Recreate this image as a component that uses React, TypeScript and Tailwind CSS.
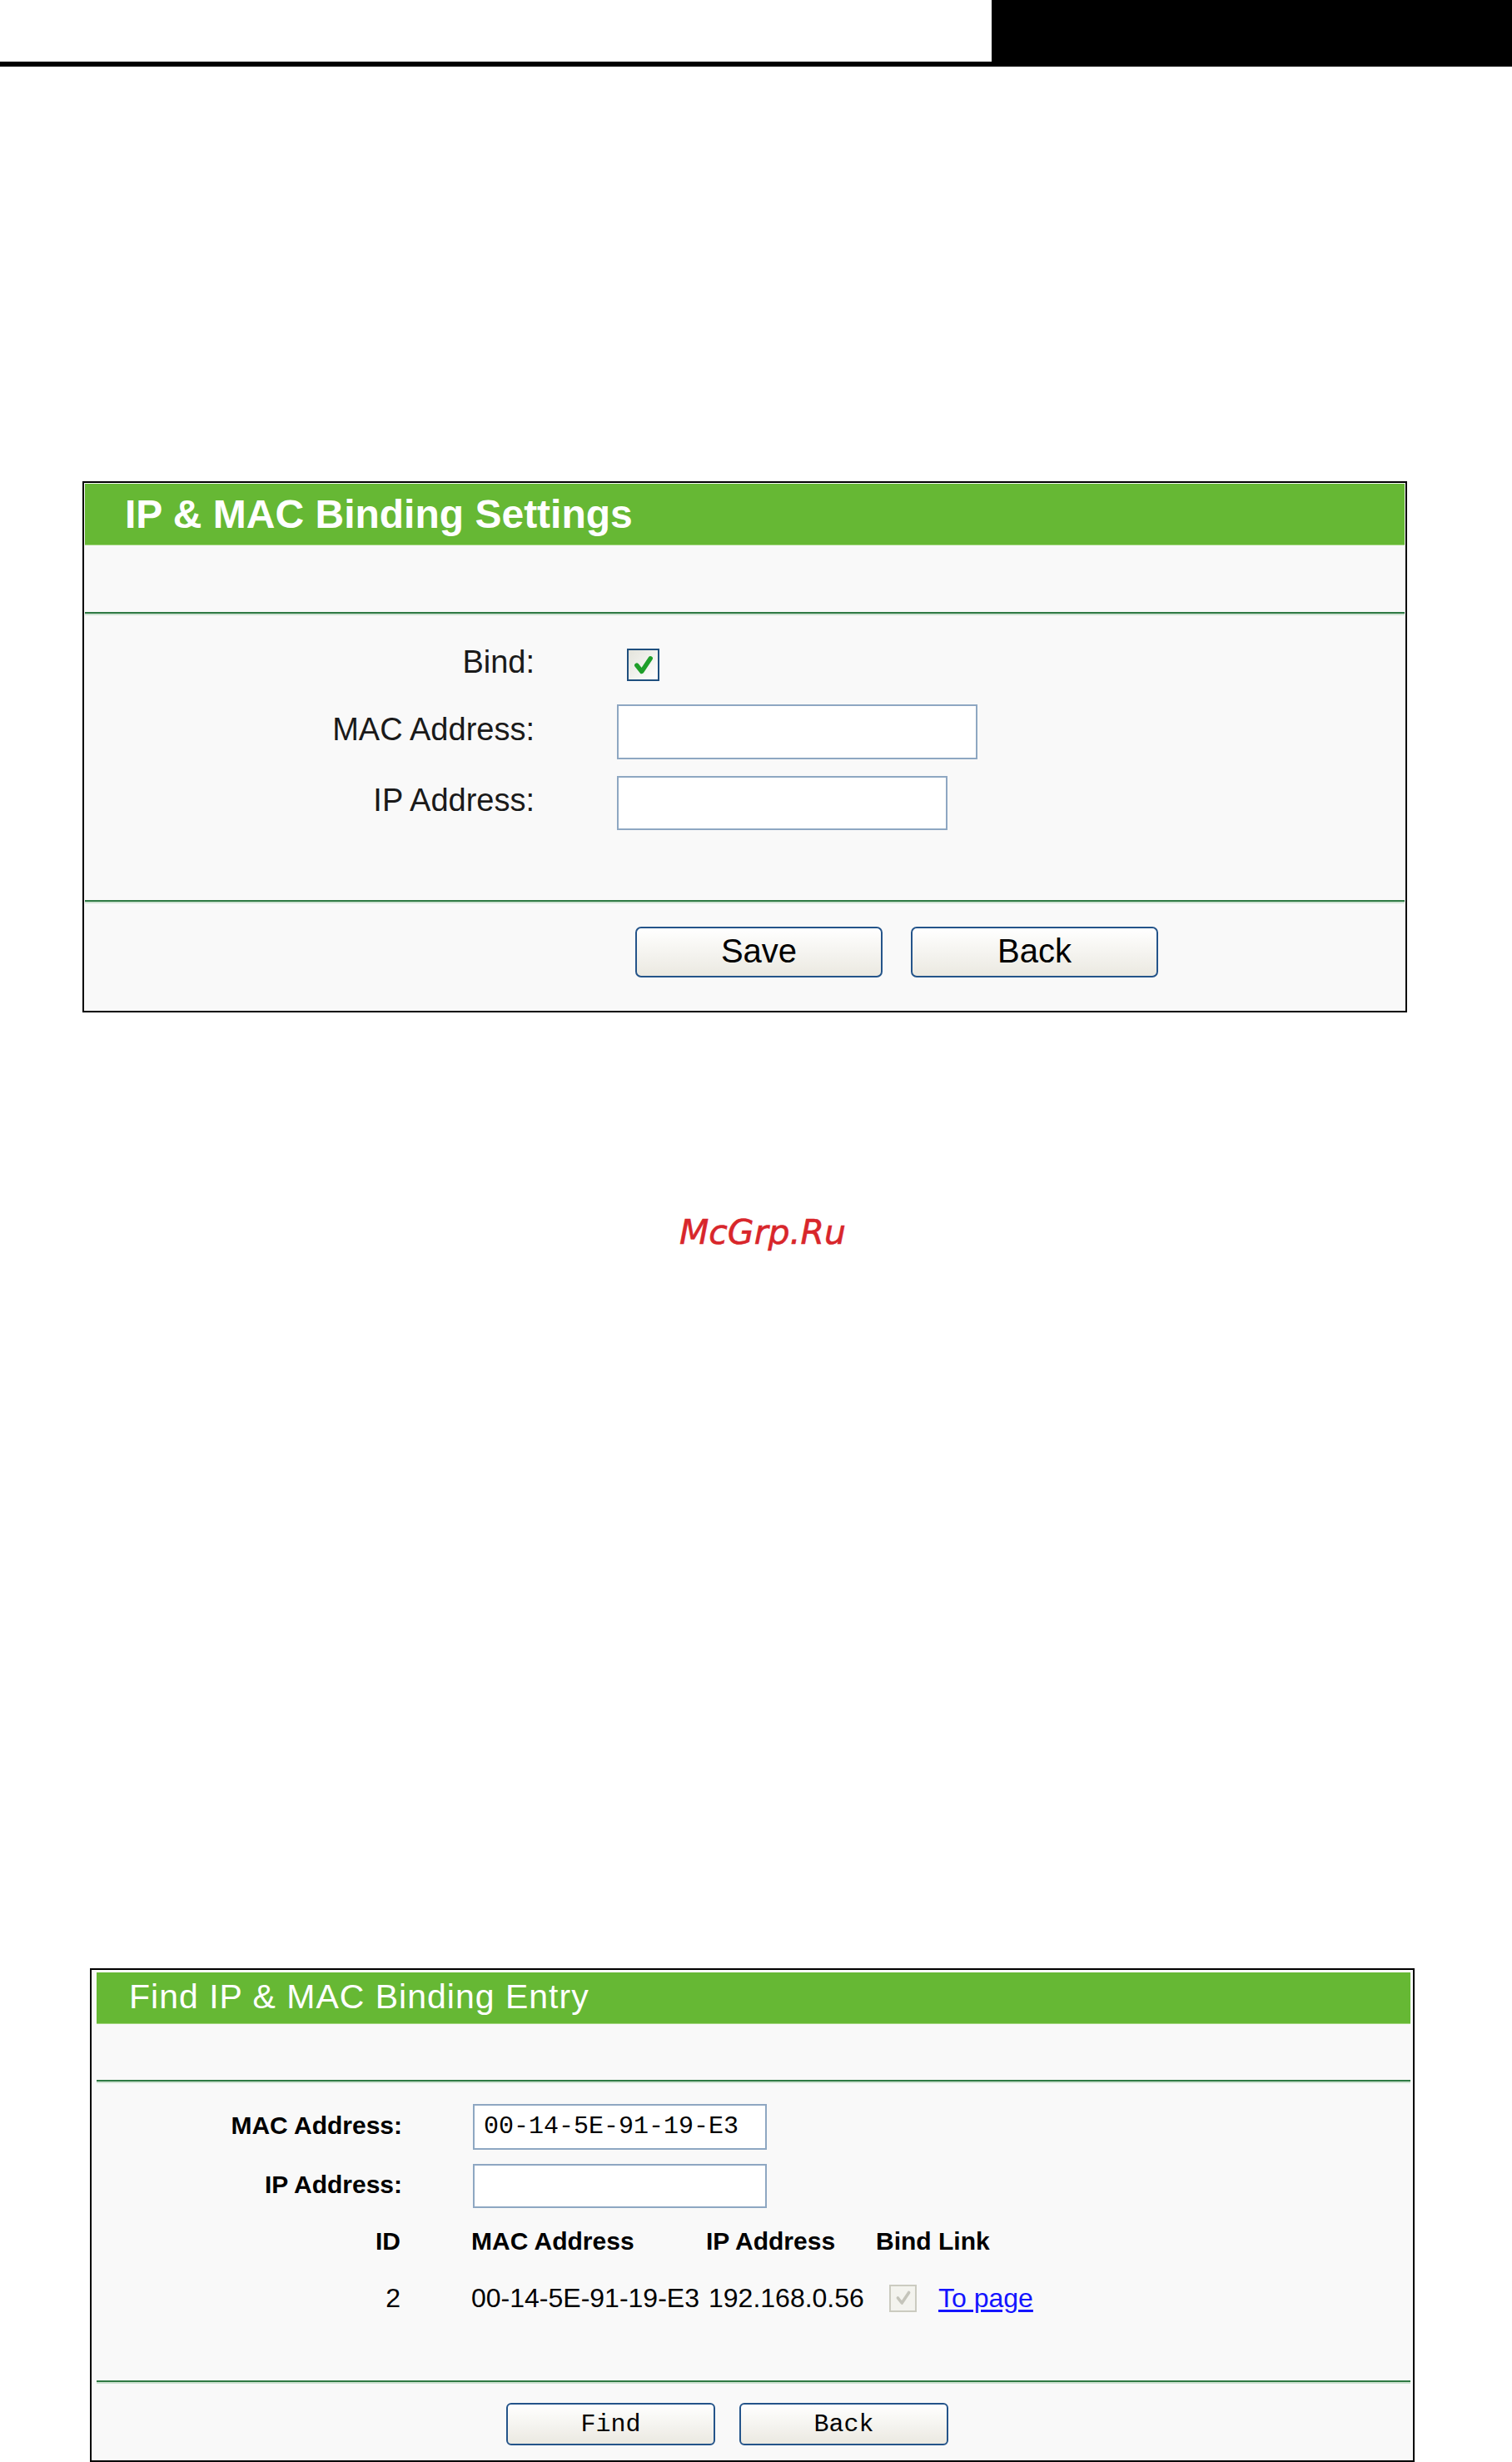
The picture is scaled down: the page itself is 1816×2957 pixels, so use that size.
import React from "react";

const sans = "font-['Liberation_Sans',Arial,sans-serif]";
const mono = "font-['Liberation_Mono','Courier_New',monospace]";

function Check({ className, width = 3.6 }: { className: string; width?: number }) {
  return (
    <svg viewBox="0 0 20 20" className={className}>
      <path d="M4.5 10 L8.5 15 L15.5 4.5" fill="none" stroke="currentColor" strokeWidth={width} strokeLinecap="round" strokeLinejoin="round" />
    </svg>
  );
}

function Divider() {
  return (
    <div>
      <div className="h-[2px] bg-[#2f7a44]" />
      <div className="h-[2px] bg-[#cfe3d3]" />
    </div>
  );
}

function BigButton({ label }: { label: string }) {
  return (
    <button className={`w-[297px] h-[61px] rounded-[7px] border-2 border-[#24548a] bg-gradient-to-b from-white to-[#ebe9e1] text-[40px] leading-none text-black pb-[4px] ${sans}`}>
      {label}
    </button>
  );
}

function SmallButton({ label }: { label: string }) {
  return (
    <button className={`w-[251px] h-[51px] rounded-[6px] border-2 border-[#24548a] bg-gradient-to-b from-white to-[#ebe9e1] text-[30px] leading-none text-black ${mono}`}>
      {label}
    </button>
  );
}

function SettingsPanel() {
  return (
    <div className="ml-[99px] w-[1591px] h-[638px] border-2 border-black bg-[#f9f9f9] p-[1px] flex flex-col">
      <div className="h-[74px] bg-[#66b834] border-b border-[#9fd57a] flex items-center pl-[48px]">
        <span className={`text-[48px] font-bold text-white leading-none ${sans}`}>IP &amp; MAC Binding Settings</span>
      </div>
      <div className="h-[80px]" />
      <Divider />
      <div className={`flex flex-col pt-[40px] h-[342px] text-[38px] text-[#1a1a1a] ${sans}`}>
        <div className="flex items-center h-[39px]">
          <div className="w-[540px] text-right leading-none pb-[7px]">Bind:</div>
          <div className="ml-[111px] w-[39px] h-[39px] border-2 border-[#1f4f7e] bg-gradient-to-br from-[#e4e4dc] to-white flex items-center justify-center">
            <Check className="w-[30px] h-[30px] text-[#1f9f2a]" />
          </div>
        </div>
        <div className="flex items-center h-[66px] mt-[28px]">
          <div className="w-[540px] text-right leading-none pb-[7px]">MAC Address:</div>
          <div className="ml-[99px] w-[433px] h-[66px] border-2 border-[#8ea7c2] bg-white" />
        </div>
        <div className="flex items-center h-[65px] mt-[20px]">
          <div className="w-[540px] text-right leading-none pb-[7px]">IP Address:</div>
          <div className="ml-[99px] w-[397px] h-[65px] border-2 border-[#8ea7c2] bg-white" />
        </div>
      </div>
      <Divider />
      <div className="flex pl-[661px] pt-[28px] gap-[34px]">
        <BigButton label="Save" />
        <BigButton label="Back" />
      </div>
    </div>
  );
}

function FindPanel() {
  return (
    <div className="ml-[108px] w-[1591px] h-[593px] border-2 border-black bg-[#f9f9f9] pl-[6px] pr-[3px] pt-[3px] flex flex-col">
      <div className="h-[62px] bg-[#66b834] border-b border-[#9fd57a] flex items-center pl-[39px]">
        <span className={`text-[41px] text-white leading-none tracking-[1px] pb-[2px] ${sans}`}>Find IP &amp; MAC Binding Entry</span>
      </div>
      <div className="h-[67px]" />
      <Divider />
      <div className={`flex flex-col pt-[25px] h-[357px] text-black ${sans}`}>
        <div className="flex items-center h-[55px]">
          <div className="w-[367px] text-right text-[30px] font-bold leading-none pb-[4px]">MAC Address:</div>
          <div className={`ml-[85px] w-[353px] h-[55px] border-2 border-[#8ea7c2] bg-white flex items-center pl-[11px] text-[30px] ${mono}`}>
            00-14-5E-91-19-E3
          </div>
        </div>
        <div className="flex items-center h-[53px] mt-[17px]">
          <div className="w-[367px] text-right text-[30px] font-bold leading-none pb-[4px]">IP Address:</div>
          <div className="ml-[85px] w-[353px] h-[53px] border-2 border-[#8ea7c2] bg-white" />
        </div>
        <div className="flex items-center h-[40px] mt-[20px] text-[30px] font-bold leading-none">
          <div className="w-[365px] text-right">ID</div>
          <div className="ml-[85px] w-[282px]">MAC Address</div>
          <div className="w-[204px]">IP Address</div>
          <div>Bind Link</div>
        </div>
        <div className="flex items-center h-[40px] mt-[28px] text-[32px] leading-none">
          <div className="w-[365px] text-right">2</div>
          <div className="ml-[85px] w-[285px]">00-14-5E-91-19-E3</div>
          <div className="w-[201px]">192.168.0.56</div>
          <div className="ml-[16px] w-[33px] h-[33px] border-2 border-[#cbcbc0] bg-[#f3f3ee] flex items-center justify-center">
            <Check className="w-[24px] h-[24px] text-[#c4c4ba]" width={3} />
          </div>
          <a href="#" className="ml-[26px] text-[#1414ff] underline underline-offset-[3px]">To page</a>
        </div>
      </div>
      <Divider />
      <div className="flex pl-[492px] pt-[23px] gap-[29px]">
        <SmallButton label="Find" />
        <SmallButton label="Back" />
      </div>
    </div>
  );
}

export default function App() {
  return (
    <div className="w-[1816px] h-[2957px] bg-white overflow-hidden">
      <div className="flex h-[74px]">
        <div className="flex-1 bg-white" />
        <div className="w-[625px] bg-black" />
      </div>
      <div className="h-[6px] bg-black" />
      <div className="h-[498px]" />
      <SettingsPanel />
      <div className="h-[244px]" />
      <div className="h-[40px] text-center pl-[16px]">
        <span className="text-[41px] leading-[40px] italic text-[#d8262b] font-['DejaVu_Sans',sans-serif] [-webkit-text-stroke:0.6px_#d8262b]">McGrp.Ru</span>
      </div>
      <div className="h-[864px]" />
      <FindPanel />
    </div>
  );
}
